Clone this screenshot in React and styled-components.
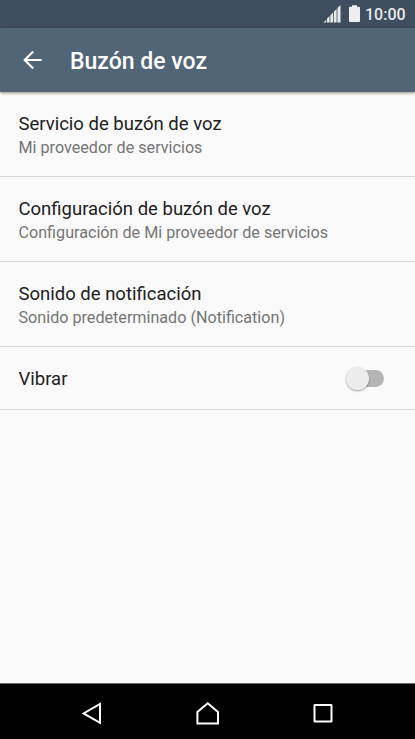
import React from "react";
import styled, { createGlobalStyle } from "styled-components";

const GlobalStyle = createGlobalStyle`
  * {
    box-sizing: border-box;
  }
  body {
    margin: 0;
    font-family: Roboto, "Noto Sans", sans-serif;
    background-color: #fafafa;
  }
`;

const Screen = styled.div`
  display: flex;
  flex-direction: column;
  height: 739px;
  overflow: hidden;
  background-color: #fafafa;
`;

const StatusBar = styled.div`
  display: flex;
  justify-content: flex-end;
  align-items: center;
  height: 28px;
  padding-right: 9px;
  background-color: #3e4e5e;
`;

const SignalIcon = styled.svg`
  margin-right: 8px;
`;

const BatteryIcon = styled.svg`
  margin-right: 5px;
`;

const Time = styled.span`
  width: 41px;
  color: #e6e9eb;
  font-size: 16px;
  font-weight: 500;
  line-height: 28px;
  padding-top: 1px;
  white-space: nowrap;
`;

const Toolbar = styled.header`
  display: flex;
  align-items: center;
  flex-shrink: 0;
  height: 64px;
  padding-left: 22px;
  background-color: #526577;
  box-shadow: 0 1px 3px rgba(0, 0, 0, 0.45);
`;

const BackButton = styled.button`
  display: flex;
  width: 20px;
  height: 20px;
  margin-right: 28px;
  padding: 0;
  border: none;
  background: none;
`;

const Title = styled.h1`
  margin: 0;
  padding-top: 4px;
  color: #fff;
  font-size: 23px;
  font-weight: 500;
  line-height: 28px;
`;

const List = styled.ul`
  flex: 1;
  margin: 0;
  padding: 0;
  list-style: none;
`;

const ListItem = styled.li`
  display: flex;
  justify-content: space-between;
  align-items: center;
  height: ${(props) => props.$height}px;
  padding: 0 31px 0 18.5px;
  border-bottom: 1px solid #dadada;
`;

const Label = styled.div`
  padding-top: 2px;
  color: #212121;
  font-size: 18.5px;
  line-height: 24px;
`;

const Summary = styled.div`
  color: #757575;
  font-size: 16.15px;
  line-height: 23px;
`;

const Switch = styled.button`
  display: flex;
  align-items: center;
  width: 38px;
  height: 24px;
  padding: 0;
  border: none;
  background: none;
`;

const Thumb = styled.span`
  flex-shrink: 0;
  width: 23px;
  height: 23px;
  border-radius: 50%;
  background-color: #ececec;
  box-shadow: 0 1px 2px rgba(0, 0, 0, 0.35);
  z-index: 1;
`;

const Track = styled.span`
  width: 32px;
  height: 17px;
  margin-left: -17px;
  border-radius: 9px;
  background-color: #b5b5b5;
`;

const NavBar = styled.nav`
  display: flex;
  justify-content: center;
  align-items: center;
  gap: 91px;
  height: 56px;
  padding-top: 3px;
  border-top: 1px solid #6a6a6a;
  background-color: #000;
`;

const NavButton = styled.button`
  display: flex;
  width: 24px;
  height: 24px;
  padding: 0;
  border: none;
  background: none;
`;

const settings = [
  { label: "Servicio de buzón de voz", summary: "Mi proveedor de servicios" },
  {
    label: "Configuración de buzón de voz",
    summary: "Configuración de Mi proveedor de servicios",
  },
  {
    label: "Sonido de notificación",
    summary: "Sonido predeterminado (Notification)",
  },
];

const App = () => (
  <>
    <GlobalStyle />
    <Screen>
      <StatusBar>
        <SignalIcon width="18" height="18" viewBox="0 0 18 18" fill="#e6e9eb">
          <path d="M0.5 17.5L3.2 14.7V17.5zM4 13.7L6.6 11V17.5H4zM7.4 10.2L10 7.5V17.5H7.4zM10.8 6.7L13.6 3.9V17.5H10.8zM14.4 3L17.5 0V17.5H14.4z" />
        </SignalIcon>
        <BatteryIcon width="11" height="18" viewBox="0 0 11 18" fill="#eceef0">
          <path d="M3 0.2H8V1.8H10Q11 1.8 11 2.8V16Q11 17 10 17H1Q0 17 0 16V2.8Q0 1.8 1 1.8H3z" />
        </BatteryIcon>
        <Time>10:00</Time>
      </StatusBar>
      <Toolbar>
        <BackButton aria-label="Atrás">
          <svg
            width="20"
            height="20"
            viewBox="0 0 20 20"
            fill="none"
            stroke="#fff"
            strokeWidth="2.1"
          >
            <path d="M19.7 10H2.5M11.2 1.5L2.7 10L11.2 18.5" />
          </svg>
        </BackButton>
        <Title>Buzón de voz</Title>
      </Toolbar>
      <List>
        {settings.map(({ label, summary }) => (
          <ListItem key={label} $height={85}>
            <div>
              <Label>{label}</Label>
              <Summary>{summary}</Summary>
            </div>
          </ListItem>
        ))}
        <ListItem $height={63}>
          <Label>Vibrar</Label>
          <Switch role="switch" aria-checked="false" aria-label="Vibrar">
            <Thumb />
            <Track />
          </Switch>
        </ListItem>
      </List>
      <NavBar>
        <NavButton>
          <svg width="24" height="24" fill="none" stroke="#fff" strokeWidth="2">
            <path d="M19 3V21.8L2.6 12.4z" />
          </svg>
        </NavButton>
        <NavButton>
          <svg width="24" height="24" fill="none" stroke="#fff" strokeWidth="2">
            <path d="M11.7 2.2L22 11V22.5H1.4V11z" />
          </svg>
        </NavButton>
        <NavButton>
          <svg width="24" height="24" fill="none" stroke="#fff" strokeWidth="2">
            <rect x="3.5" y="4" width="17" height="16.5" rx="0.3" />
          </svg>
        </NavButton>
      </NavBar>
    </Screen>
  </>
);

export default App;
